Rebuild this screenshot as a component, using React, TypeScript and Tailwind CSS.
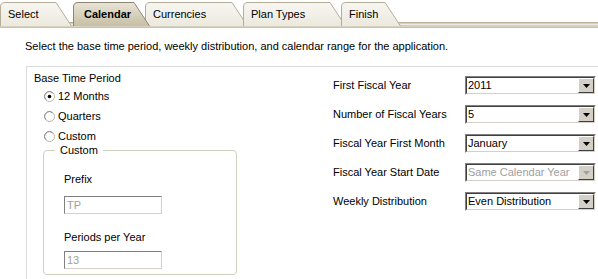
import React from "react";

const tabs = [
  { label: "Select", left: 0, right: 72, active: false },
  { label: "Calendar", left: 73, right: 150, active: true },
  { label: "Currencies", left: 145, right: 248, active: false },
  { label: "Plan Types", left: 243, right: 346, active: false },
  { label: "Finish", left: 341, right: 401, active: false },
];

function TabShape({ w, active }: { w: number; active: boolean }) {
  const h = 24;
  const s = 16;
  const d = `M0.5 ${h} L0.5 5 Q0.5 0.5 5 0.5 L${w - s} 0.5 L${w - 0.5} ${h}`;
  return (
    <svg className="absolute inset-0" width={w} height={h} viewBox={`0 0 ${w} ${h}`}>
      <defs>
        <linearGradient id="act" x1="0" y1="0" x2="0" y2="1">
          <stop offset="0" stopColor="#E8E4D6" />
          <stop offset="1" stopColor="#C7BFA5" />
        </linearGradient>
        <linearGradient id="ina" x1="0" y1="0" x2="0" y2="1">
          <stop offset="0" stopColor="#F7F6F1" />
          <stop offset="1" stopColor="#ECE9DE" />
        </linearGradient>
      </defs>
      <path d={d + " Z"} fill={active ? "url(#act)" : "url(#ina)"} stroke="none" />
      <path d={d} fill="none" stroke={active ? "#8E8670" : "#B3AD98"} strokeWidth="1" />
    </svg>
  );
}

function Radio({ checked }: { checked?: boolean }) {
  return (
    <svg width="11" height="11" viewBox="0 0 11 11">
      <circle cx="5.5" cy="5.5" r="5" fill="#fff" stroke="#B8B4A6" />
      <path d="M2 8.5 A4.6 4.6 0 0 1 8.5 2" fill="none" stroke="#8A8A8A" strokeWidth="1" />
      {checked && <circle cx="5.5" cy="5.5" r="1.8" fill="#000" />}
    </svg>
  );
}

function Select({ value, disabled }: { value: string; disabled?: boolean }) {
  return (
    <div className="w-[131px] h-[19px] border-t border-l border-[#808080] border-r border-b border-r-white border-b-white">
      <div className="h-full border-t border-l border-[#404040] border-r border-b border-r-[#D4D0C8] border-b-[#D4D0C8] bg-white flex items-center">
        <span className={`flex-1 pl-[1px] leading-none whitespace-nowrap overflow-hidden ${disabled ? "text-[#A0A0A0]" : "text-black"}`}>{value}</span>
        <div className="w-[16px] h-[15px] shrink-0 bg-[#D4D0C8] border-t border-l border-white border-r border-b border-r-[#404040] border-b-[#404040] flex items-center justify-center">
          <svg width="7" height="4" viewBox="0 0 7 4">
            <path d="M0 0 H7 L3.5 4 Z" fill={disabled ? "#A0A0A0" : "#000"} />
          </svg>
        </div>
      </div>
    </div>
  );
}

function TextBox({ value }: { value: string }) {
  return (
    <div className="w-[98px] h-[18px] border-t border-l border-[#808080] border-r border-b border-r-[#D4D0C8] border-b-[#D4D0C8] bg-white flex items-center">
      <span className="pl-[2px] text-[#A0A0A0] leading-none">{value}</span>
    </div>
  );
}

export default function App() {
  const rows: [string, string, boolean][] = [
    ["First Fiscal Year", "2011", false],
    ["Number of Fiscal Years", "5", false],
    ["Fiscal Year First Month", "January", false],
    ["Fiscal Year Start Date", "Same Calendar Year", true],
    ["Weekly Distribution", "Even Distribution", false],
  ];
  return (
    <div className="w-[598px] h-[279px] bg-white overflow-hidden text-[11px] text-black font-['Liberation_Sans',Arial,sans-serif]">
      <div className="relative h-[28px] bg-white">
        <div className="absolute left-0 right-0 top-[22px] h-[6px] bg-[#D6D1BE] border-t border-[#B9B196] border-b border-b-[#C9C3AC]" />
        <div className="absolute left-0 right-0 top-[24px] h-px bg-[#EDEAE0]" />
        {tabs
          .filter((t) => !t.active)
          .concat(tabs.filter((t) => t.active))
          .map((t) => (
            <div
              key={t.label}
              className="absolute top-[2px] h-[24px]"
              style={{ left: t.left, width: t.right - t.left }}
            >
              <TabShape w={t.right - t.left} active={t.active} />
              <span
                className={`relative block pt-[6px] leading-[13px] ${t.active ? "font-bold pl-[11px]" : "pl-[8px]"}`}
              >
                {t.label}
              </span>
            </div>
          ))}
      </div>
      <div className="pl-[25px] pt-[12px] leading-[13px]">
        Select the base time period, weekly distribution, and calendar range for the application.
      </div>
      <div className="ml-[26px] mt-[13px] border-l border-t border-[#DCDCDC] h-[220px] flex">
        <div className="w-[280px] pl-[7px] pt-[5px]">
          <div className="leading-[13px]">Base Time Period</div>
          <div className="pl-[10px] pt-[5px] flex flex-col gap-[7px]">
            {[
              ["12 Months", true],
              ["Quarters", false],
              ["Custom", false],
            ].map(([l, c]) => (
              <div key={l as string} className="flex items-center gap-[3px] h-[13px]">
                <Radio checked={c as boolean} />
                <span>{l as string}</span>
              </div>
            ))}
          </div>
          <fieldset className="ml-[9px] mt-[1px] w-[194px] h-[131px] border border-[#D0D0BF] rounded-[4px] p-0">
            <legend className="ml-[11px] px-[5px] leading-[13px]">Custom</legend>
            <div className="pl-[20px]">
              <div className="pt-[16px] leading-[13px]">Prefix</div>
              <div className="pt-[10px]">
                <TextBox value="TP" />
              </div>
              <div className="pt-[17px] leading-[13px]">Periods per Year</div>
              <div className="pt-[7px]">
                <TextBox value="13" />
              </div>
            </div>
          </fieldset>
        </div>
        <div className="pl-[26px] pt-[9px] flex flex-col gap-[10px]">
          {rows.map(([l, v, d]) => (
            <div key={l} className="flex items-center h-[19px]">
              <span className="w-[132px]">{l}</span>
              <Select value={v} disabled={d} />
            </div>
          ))}
        </div>
      </div>
    </div>
  );
}
